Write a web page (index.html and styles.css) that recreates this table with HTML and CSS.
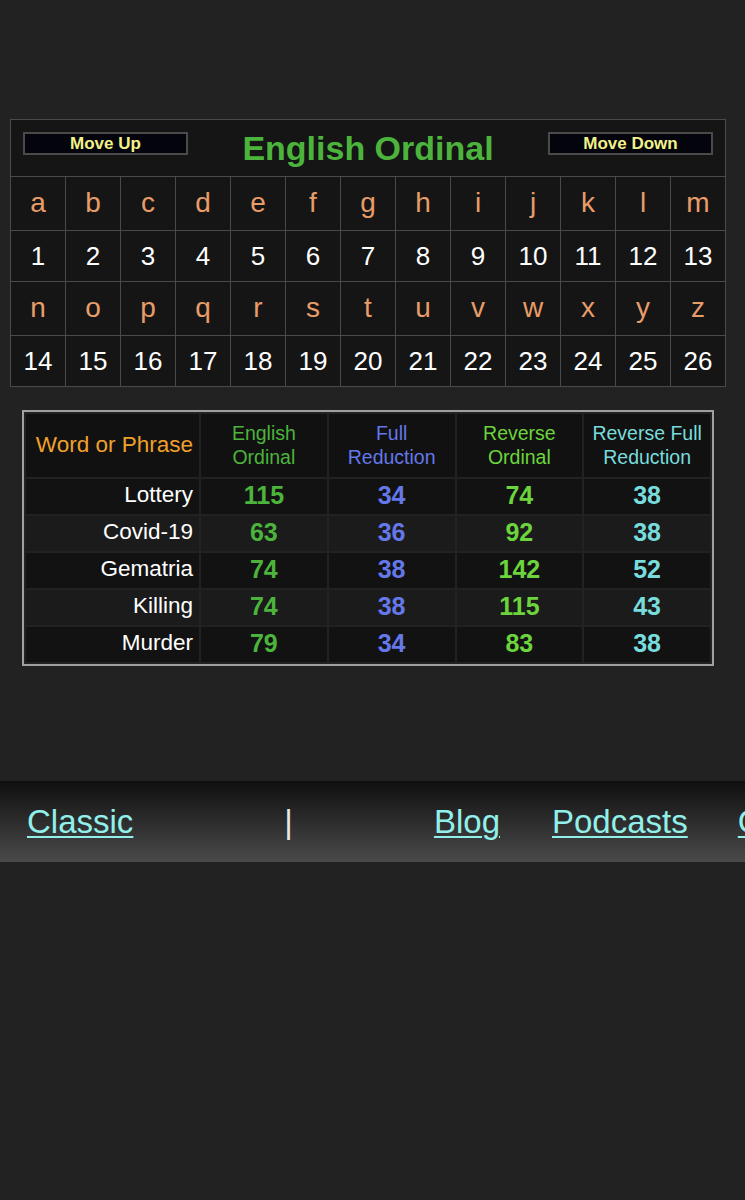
FILE: index.html
```html
<!DOCTYPE html>
<html>
<head>
<meta charset="utf-8">
<link rel="stylesheet" href="styles.css">
</head>
<body>
<div class="page">
  <table class="cipher">
    <tr>
      <td colspan="13" class="cipher-head">
        <div class="head-row">
          <button class="move">Move Up</button>
          <span class="title">English Ordinal</span>
          <button class="move">Move Down</button>
        </div>
      </td>
    </tr>
    <tr class="letters">
      <td>a</td><td>b</td><td>c</td><td>d</td><td>e</td><td>f</td><td>g</td><td>h</td><td>i</td><td>j</td><td>k</td><td>l</td><td>m</td>
    </tr>
    <tr class="nums">
      <td>1</td><td>2</td><td>3</td><td>4</td><td>5</td><td>6</td><td>7</td><td>8</td><td>9</td><td>10</td><td>11</td><td>12</td><td>13</td>
    </tr>
    <tr class="letters">
      <td>n</td><td>o</td><td>p</td><td>q</td><td>r</td><td>s</td><td>t</td><td>u</td><td>v</td><td>w</td><td>x</td><td>y</td><td>z</td>
    </tr>
    <tr class="nums">
      <td>14</td><td>15</td><td>16</td><td>17</td><td>18</td><td>19</td><td>20</td><td>21</td><td>22</td><td>23</td><td>24</td><td>25</td><td>26</td>
    </tr>
  </table>

  <table class="results">
    <tr class="rhead">
      <td class="word-h">Word or Phrase</td>
      <td class="c-eo">English<br>Ordinal</td>
      <td class="c-fr">Full<br>Reduction</td>
      <td class="c-ro">Reverse<br>Ordinal</td>
      <td class="c-rfr">Reverse Full<br>Reduction</td>
    </tr>
    <tr class="odd">
      <td class="word">Lottery</td><td class="v c-eo">115</td><td class="v c-fr">34</td><td class="v c-ro">74</td><td class="v c-rfr">38</td>
    </tr>
    <tr class="even">
      <td class="word">Covid-19</td><td class="v c-eo">63</td><td class="v c-fr">36</td><td class="v c-ro">92</td><td class="v c-rfr">38</td>
    </tr>
    <tr class="odd">
      <td class="word">Gematria</td><td class="v c-eo">74</td><td class="v c-fr">38</td><td class="v c-ro">142</td><td class="v c-rfr">52</td>
    </tr>
    <tr class="even">
      <td class="word">Killing</td><td class="v c-eo">74</td><td class="v c-fr">38</td><td class="v c-ro">115</td><td class="v c-rfr">43</td>
    </tr>
    <tr class="odd">
      <td class="word">Murder</td><td class="v c-eo">79</td><td class="v c-fr">34</td><td class="v c-ro">83</td><td class="v c-rfr">38</td>
    </tr>
  </table>
</div>

<nav class="footer">
  <a href="#" class="link l-classic">Classic</a>
  <span class="sep">|</span>
  <a href="#" class="link l-blog">Blog</a>
  <a href="#" class="link l-pod">Podcasts</a>
  <a href="#" class="link">Contact</a>
</nav>
</body>
</html>
```

FILE: styles.css
```css
html, body {
  margin: 0;
  padding: 0;
  background: #222222;
  font-family: "Liberation Sans", Arial, sans-serif;
  height: 1200px;
  overflow: hidden;
}

.page {
  padding-top: 119px;
}

.cipher {
  margin-left: 10px;
  width: 716px;
  border-collapse: collapse;
  background: #151515;
  table-layout: fixed;
}

.cipher td {
  border: 1px solid #4a4a4a;
  text-align: center;
  padding: 0;
}

.cipher-head {
  height: 56px;
}

.head-row {
  display: flex;
  align-items: center;
  justify-content: space-between;
  padding: 0 12px;
}

.move {
  width: 165px;
  height: 23px;
  background: #04040c;
  border: 2px solid #4a4a4a;
  color: #f2f28a;
  font-family: "Liberation Sans", Arial, sans-serif;
  font-weight: bold;
  font-size: 17px;
  line-height: 19px;
  padding: 0;
  margin-top: -10px;
}

.title {
  color: #4cb43c;
  font-weight: bold;
  font-size: 34px;
}

.letters td {
  height: 51px;
  color: #e89c68;
  font-size: 28px;
  padding-bottom: 2px;
}

.nums td {
  height: 50px;
  color: #ffffff;
  font-size: 26px;
}

.results {
  margin-top: 23px;
  margin-left: 22px;
  width: 692px;
  border: 2px solid #a0a0a0;
  border-spacing: 2px;
  background: #222222;
  table-layout: fixed;
}

.results td {
  padding: 0;
  text-align: center;
}

.rhead td {
  height: 61px;
  background: #111111;
  font-size: 19.5px;
  line-height: 24px;
  padding-bottom: 2px;
}

.rhead .word-h {
  width: 167px;
  color: #f0a02c;
  font-size: 22.5px;
  text-align: right;
  padding-right: 6px;
}

.odd td {
  background: #121212;
}

.even td {
  background: #1b1b1b;
}

.odd td, .even td {
  height: 32px;
  padding-bottom: 3px;
}

.word {
  color: #ffffff;
  font-size: 22.5px;
  text-align: right !important;
  padding-right: 6px !important;
}

.v {
  font-weight: bold;
  font-size: 25px;
}

.c-eo { color: #4cb43c; }
.c-fr { color: #6478ea; }
.c-ro { color: #6cd43c; }
.c-rfr { color: #78dcdc; }

.footer {
  margin-top: 115px;
  height: 81px;
  display: flex;
  align-items: center;
  padding-left: 27px;
  background: linear-gradient(#0f0f0f, #4a4a4a);
  white-space: nowrap;
  overflow: hidden;
  font-size: 33px;
}

.link {
  color: #92f0ea;
  text-decoration: underline;
  text-underline-offset: 3px;
  text-decoration-thickness: 2px;
  flex-shrink: 0;
}

.l-classic { margin-right: 151px; }
.l-blog { margin-right: 52px; }
.l-pod { margin-right: 50px; }

.sep {
  color: #e8e8e8;
  margin-right: 141px;
  flex-shrink: 0;
}
```
